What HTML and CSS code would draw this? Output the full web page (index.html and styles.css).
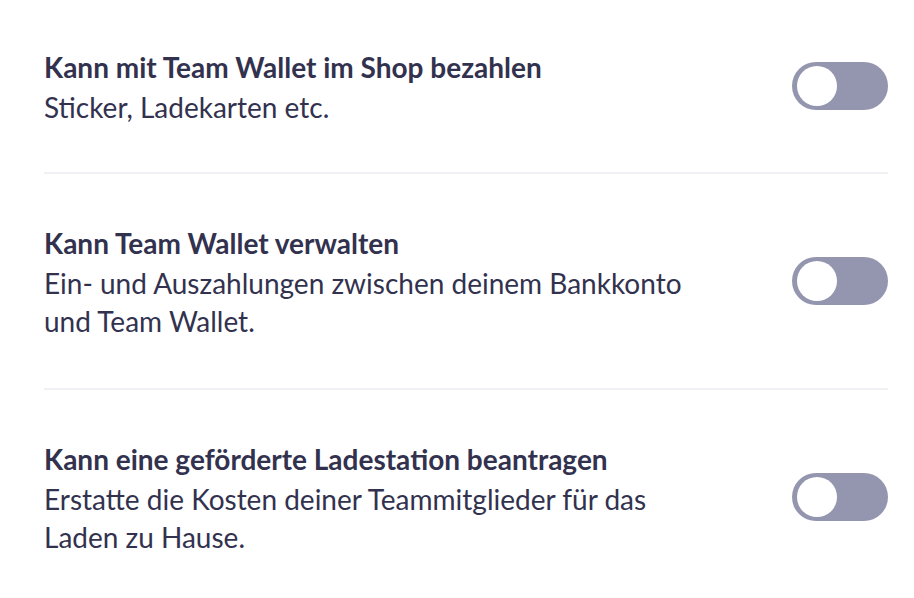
FILE: index.html
```html
<!DOCTYPE html>
<html lang="de">
<head>
    <meta charset="UTF-8">
    <meta name="viewport" content="width=device-width, initial-scale=1.0">
    <title>Team Wallet Berechtigungen</title>
    <link rel="stylesheet" href="styles.css">
</head>
<body>
    <div class="settings">
        <div class="setting">
            <div class="setting-text">
                <div class="setting-title">Kann mit Team Wallet im Shop bezahlen</div>
                <div class="setting-desc">Sticker, Ladekarten etc.</div>
            </div>
            <label class="toggle">
                <input type="checkbox">
                <span class="knob"></span>
            </label>
        </div>
        <div class="setting">
            <div class="setting-text">
                <div class="setting-title">Kann Team Wallet verwalten</div>
                <div class="setting-desc">Ein- und Auszahlungen zwischen deinem Bankkonto und Team Wallet.</div>
            </div>
            <label class="toggle">
                <input type="checkbox">
                <span class="knob"></span>
            </label>
        </div>
        <div class="setting">
            <div class="setting-text">
                <div class="setting-title">Kann eine geförderte Ladestation beantragen</div>
                <div class="setting-desc">Erstatte die Kosten deiner Teammitglieder für das Laden zu Hause.</div>
            </div>
            <label class="toggle">
                <input type="checkbox">
                <span class="knob"></span>
            </label>
        </div>
    </div>
</body>
</html>
```

FILE: styles.css
```css
body {
    margin: 0;
    background: #fff;
    font-family: Lato, "Open Sans", sans-serif;
    color: #32324f;
}

.settings {
    padding: 0 26px 0 44px;
}

.setting {
    display: flex;
    align-items: center;
    justify-content: space-between;
    padding: 50px 0 48px;
    border-bottom: 2px solid #f1f1f5;
}

.setting:first-child {
    padding-top: 48px;
    padding-bottom: 46px;
}

.setting:last-child {
    border-bottom: none;
}

.setting-text {
    max-width: 650px;
    font-size: 28px;
    line-height: 38px;
}

.setting-title {
    font-weight: 700;
}

.setting-desc {
    margin-top: 2px;
    font-weight: 400;
}

.toggle {
    position: relative;
    flex-shrink: 0;
    width: 96px;
    height: 48px;
    margin-bottom: 3px;
    border-radius: 24px;
    background: #9396ae;
    cursor: pointer;
}

.toggle input {
    display: none;
}

.knob {
    position: absolute;
    top: 4px;
    left: 5px;
    width: 40px;
    height: 40px;
    border-radius: 50%;
    background: #fff;
}
```
